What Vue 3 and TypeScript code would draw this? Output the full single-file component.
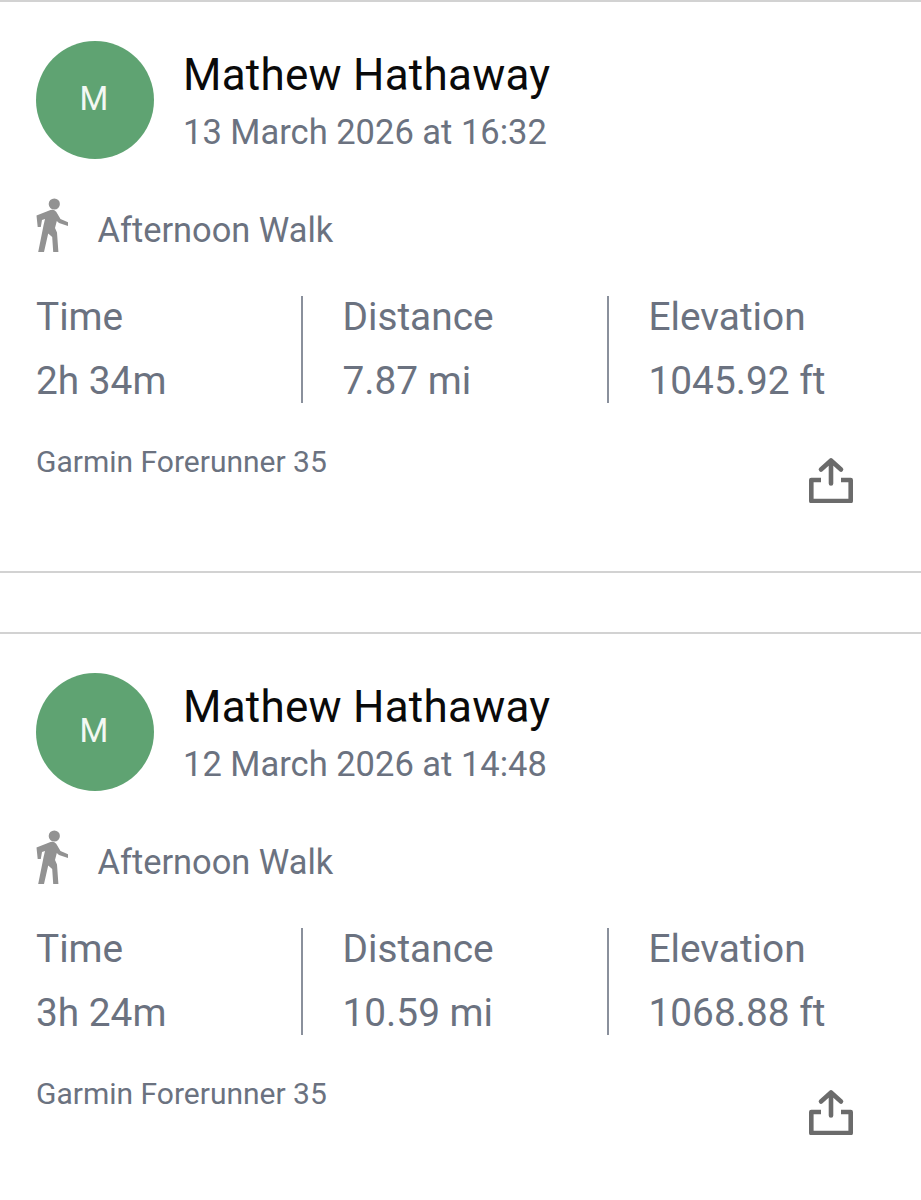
<template>
  <div class="feed">
    <article v-for="act in activities" :key="act.date" class="card">
      <div class="head">
        <div class="avatar">M</div>
        <div class="who">
          <div class="name">{{ act.name }}</div>
          <div class="date">{{ act.date }}</div>
        </div>
      </div>

      <div class="title-row">
        <svg class="walk" viewBox="0 0 32 54" width="32" height="54">
          <circle cx="18.3" cy="6" r="5.6" fill="#929292" />
          <path
            fill="#929292"
            d="M0.5 17.5 L14.5 12 Q18 11 20.2 13.7 L24.5 21 L32.3 24.5 V28 L23 25 L20.8 23 L19 30 L21 34.5 L22.4 54 H17.2 L16.2 39 L12.2 35.5 L8 54 H2.2 L7.6 27 L9 21 L6 22 L4.8 29 L1.7 29 Z"
          />
        </svg>
        <span class="title">{{ act.title }}</span>
      </div>

      <div class="stats">
        <div v-for="stat in act.stats" :key="stat.label" class="stat">
          <div class="label">{{ stat.label }}</div>
          <div class="value">{{ stat.value }}</div>
        </div>
      </div>

      <div class="foot">
        <span class="device">{{ act.device }}</span>
        <svg class="share" viewBox="0 0 46 46" width="46" height="46" fill="none" stroke="#6b6b6b" stroke-width="4.6">
          <path d="M23 26.5 V3.5 M13 12.5 L23 3.5 L33 12.5" stroke-linecap="round" stroke-linejoin="round" />
          <path d="M13 23 H3.3 V44 H42.7 V23 H33" stroke-linejoin="round" />
        </svg>
      </div>
    </article>
  </div>
</template>

<script setup lang="ts">
interface Stat {
  label: string
  value: string
}

interface Activity {
  name: string
  date: string
  title: string
  device: string
  stats: Stat[]
}

const activities: Activity[] = [
  {
    name: 'Mathew Hathaway',
    date: '13 March 2026 at 16:32',
    title: 'Afternoon Walk',
    device: 'Garmin Forerunner 35',
    stats: [
      { label: 'Time', value: '2h 34m' },
      { label: 'Distance', value: '7.87 mi' },
      { label: 'Elevation', value: '1045.92 ft' }
    ]
  },
  {
    name: 'Mathew Hathaway',
    date: '12 March 2026 at 14:48',
    title: 'Afternoon Walk',
    device: 'Garmin Forerunner 35',
    stats: [
      { label: 'Time', value: '3h 24m' },
      { label: 'Distance', value: '10.59 mi' },
      { label: 'Elevation', value: '1068.88 ft' }
    ]
  }
]
</script>

<style>
html,
body {
  background: #fff;
}
</style>

<style scoped>
.feed {
  width: 921px;
  height: 1200px;
  overflow: hidden;
  display: flex;
  flex-direction: column;
  gap: 59px;
  font-family: Roboto, "Liberation Sans", sans-serif;
}

.card {
  flex: none;
  height: 573px;
  box-sizing: border-box;
  padding: 39px 36px 0;
  border-top: 2px solid #d2d2d2;
  border-bottom: 2px solid #d2d2d2;
}

.head {
  display: flex;
  align-items: center;
  gap: 29px;
}

.avatar {
  width: 118px;
  height: 118px;
  box-sizing: border-box;
  padding: 0 2px 4px 0;
  border-radius: 50%;
  background: #5fa372;
  color: #f2f8f3;
  font-size: 33px;
  display: flex;
  align-items: center;
  justify-content: center;
}

.who {
  margin-top: 3px;
}

.name {
  font-size: 44px;
  letter-spacing: 0.25px;
  line-height: 50px;
  color: #0a0a0a;
}

.date {
  margin-top: 10px;
  font-size: 34.5px;
  line-height: 44px;
  color: #6b7280;
}

.title-row {
  margin-top: 39px;
  display: flex;
  align-items: center;
  gap: 29.5px;
}

.title {
  padding-top: 10px;
  font-size: 34.4px;
  line-height: 44px;
  color: #6b7280;
}

.stats {
  margin-top: 44px;
  display: flex;
}

.stat {
  flex: none;
  width: 306px;
  height: 107px;
  box-sizing: border-box;
  border-left: 2px solid #8a909c;
  padding-left: 39.5px;
}

.stat:first-child {
  width: 265px;
  border-left: none;
  padding-left: 0;
}

.label,
.value {
  font-size: 38.8px;
  line-height: 42px;
  color: #6b7280;
}

.value {
  margin-top: 22px;
}

.foot {
  margin-top: 39px;
  display: flex;
  justify-content: space-between;
  align-items: flex-start;
  padding-right: 31px;
}

.device {
  font-size: 30px;
  line-height: 40px;
  color: #6b7280;
}

.share {
  margin-top: 15px;
}
</style>
